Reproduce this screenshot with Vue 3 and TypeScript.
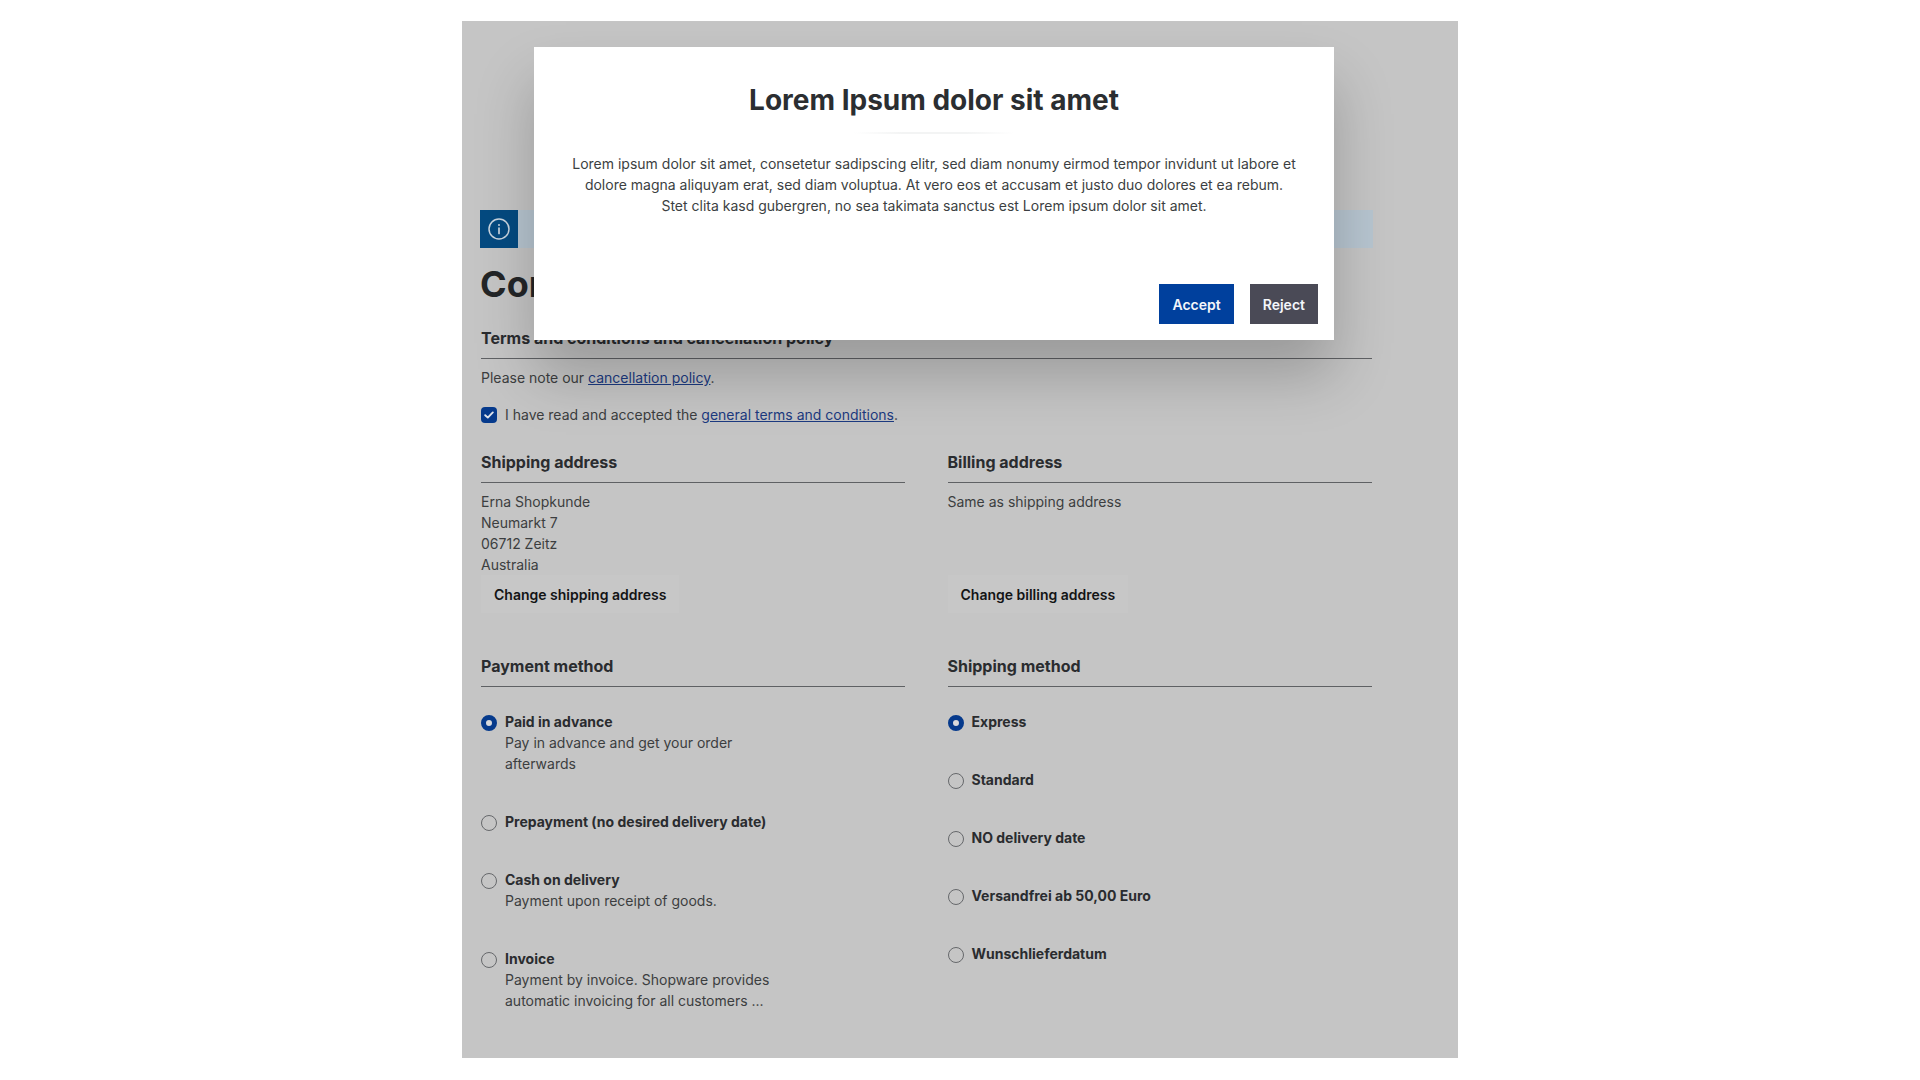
<script setup lang="ts">
interface MethodOption {
  name: string
  lines: string[]
  checked?: boolean
}

const paymentMethods: MethodOption[] = [
  { name: 'Paid in advance', lines: ['Pay in advance and get your order', 'afterwards'], checked: true },
  { name: 'Prepayment (no desired delivery date)', lines: [] },
  { name: 'Cash on delivery', lines: ['Payment upon receipt of goods.'] },
  { name: 'Invoice', lines: ['Payment by invoice. Shopware provides', 'automatic invoicing for all customers ...'] }
]

const shippingMethods: MethodOption[] = [
  { name: 'Express', lines: [], checked: true },
  { name: 'Standard', lines: [] },
  { name: 'NO delivery date', lines: [] },
  { name: 'Versandfrei ab 50,00 Euro', lines: [] },
  { name: 'Wunschlieferdatum', lines: [] }
]

const addressLines = ['Erna Shopkunde', 'Neumarkt 7', '06712 Zeitz', 'Australia']
</script>

<template>
  <div class="stage">
    <main class="panel">
      <div class="alert">
        <div class="alert-icon">
          <svg width="22" height="22" viewBox="0 0 22 22" fill="none">
            <circle cx="11" cy="11" r="10" stroke="#c9d5df" stroke-width="1.5" />
            <circle cx="11" cy="7" r="1" fill="#c9d5df" />
            <path d="M11 10v5.5" stroke="#c9d5df" stroke-width="1.7" stroke-linecap="round" />
          </svg>
        </div>
      </div>

      <h1 class="page-title">Complete order</h1>

      <h2 class="section-title">Terms and conditions and cancellation policy</h2>
      <p class="note">Please note our <a class="link">cancellation policy</a>.</p>
      <div class="accept-row">
        <span class="checkbox">
          <svg width="10" height="8" viewBox="0 0 10 8" fill="none">
            <path d="M1.2 4.2 3.8 6.6 8.8 1.4" stroke="#dfe3ea" stroke-width="1.9" stroke-linecap="round" stroke-linejoin="round" />
          </svg>
        </span>
        <span>I have read and accepted the <a class="link">general terms and conditions</a>.</span>
      </div>

      <div class="columns address-columns">
        <section>
          <h2 class="section-title">Shipping address</h2>
          <div class="address">
            <div v-for="line in addressLines" :key="line">{{ line }}</div>
          </div>
          <button class="ghost-button">Change shipping address</button>
        </section>
        <section>
          <h2 class="section-title">Billing address</h2>
          <div class="address">
            <div>Same as shipping address</div>
            <div>&nbsp;</div>
            <div>&nbsp;</div>
            <div>&nbsp;</div>
          </div>
          <button class="ghost-button">Change billing address</button>
        </section>
      </div>

      <div class="columns method-columns">
        <section>
          <h2 class="section-title">Payment method</h2>
          <div class="methods">
            <div v-for="option in paymentMethods" :key="option.name" class="method">
              <span class="radio" :class="{ 'radio-on': option.checked }"></span>
              <div>
                <div class="method-name">{{ option.name }}</div>
                <div v-for="line in option.lines" :key="line">{{ line }}</div>
              </div>
            </div>
          </div>
        </section>
        <section>
          <h2 class="section-title">Shipping method</h2>
          <div class="methods">
            <div v-for="option in shippingMethods" :key="option.name" class="method">
              <span class="radio" :class="{ 'radio-on': option.checked }"></span>
              <div>
                <div class="method-name">{{ option.name }}</div>
              </div>
            </div>
          </div>
        </section>
      </div>

      <div class="modal">
        <h3 class="modal-title">Lorem Ipsum dolor sit amet</h3>
        <div class="modal-rule"></div>
        <p class="modal-body">
          Lorem ipsum dolor sit amet, consetetur sadipscing elitr, sed diam nonumy eirmod tempor invidunt ut labore et<br />
          dolore magna aliquyam erat, sed diam voluptua. At vero eos et accusam et justo duo dolores et ea rebum.<br />
          Stet clita kasd gubergren, no sea takimata sanctus est Lorem ipsum dolor sit amet.
        </p>
        <div class="modal-actions">
          <button class="action action-accept">Accept</button>
          <button class="action action-reject">Reject</button>
        </div>
      </div>
    </main>
  </div>
</template>

<style>
html,
body {
  background: #ffffff;
}
</style>

<style scoped>
.stage {
  width: 1920px;
  height: 1080px;
  padding: 21px 0 0 462px;
  box-sizing: border-box;
  overflow: hidden;
  font-family: Inter, "Liberation Sans", sans-serif;
  font-size: 14px;
  line-height: 21px;
  color: #3c3e40;
}

.panel {
  position: relative;
  width: 996px;
  height: 1037px;
  box-sizing: border-box;
  padding: 189px 86px 0 19px;
  background: #c5c5c5;
}

.alert {
  height: 38px;
  margin: 0 -1px;
  background: #b7c5d0;
}

.alert-icon {
  width: 38px;
  height: 38px;
  display: flex;
  align-items: center;
  justify-content: center;
  background: #044a80;
}

.page-title {
  margin: 14px 0 0 -1px;
  font-size: 36px;
  line-height: 44px;
  font-weight: 700;
  color: #232527;
}

.section-title {
  margin: 0;
  padding-bottom: 8px;
  border-bottom: 1px solid #5f6164;
  font-size: 16px;
  line-height: 24px;
  font-weight: 700;
  color: #2a2c2f;
}

.page-title + .section-title {
  margin-top: 20px;
}

.note {
  margin: 8px 0 0;
}

.link {
  color: #1c3a80;
  text-decoration: underline;
}

.accept-row {
  display: flex;
  align-items: center;
  gap: 8px;
  margin-top: 16px;
}

.checkbox {
  display: flex;
  align-items: center;
  justify-content: center;
  width: 16px;
  height: 16px;
  margin-top: 1px;
  border-radius: 4px;
  background: #063a8c;
}

.columns {
  display: grid;
  grid-template-columns: 424px 424.5px;
  gap: 42.5px;
}

.address-columns {
  margin-top: 25px;
}

.method-columns {
  margin-top: 41px;
}

.address {
  margin-top: 8px;
}

.ghost-button {
  display: block;
  height: 38px;
  margin-top: 0;
  padding: 0 13px;
  border: none;
  background: #c7c7c7;
  font-family: inherit;
  font-size: 14px;
  font-weight: 600;
  color: #131415;
}

.methods {
  margin-top: 24px;
}

.method {
  display: flex;
  gap: 8px;
  margin-bottom: 37px;
}

.method-name {
  font-weight: 700;
  color: #2a2c2f;
}

.radio {
  flex: none;
  width: 16px;
  height: 16px;
  margin-top: 4px;
  box-sizing: border-box;
  border: 1px solid #66686b;
  border-radius: 50%;
}

.radio-on {
  border: 5px solid #063a8c;
  background: #d8d9dc;
}

.modal {
  position: absolute;
  top: 26px;
  left: 72px;
  width: 800px;
  height: 293px;
  display: flex;
  flex-direction: column;
  background: #ffffff;
  box-shadow: 0 35px 55px rgba(0, 0, 0, 0.22);
}

.modal-title {
  margin: 36px 0 0;
  font-size: 28px;
  line-height: 34px;
  font-weight: 700;
  text-align: center;
  color: #2b2e31;
}

.modal-rule {
  width: 160px;
  height: 2px;
  margin: 15px auto 0;
  background: linear-gradient(90deg, #ffffff, #f3f4f4 30%, #f3f4f4 70%, #ffffff);
}

.modal-body {
  margin: 19px 0 0;
  text-align: center;
  color: #3c3f42;
}

.modal-actions {
  display: flex;
  justify-content: flex-end;
  gap: 16px;
  margin-top: auto;
  padding: 0 16px 16px 0;
}

.action {
  height: 40px;
  padding: 0 13px;
  border: none;
  font-family: inherit;
  font-size: 14px;
  font-weight: 600;
  color: #f4f6fa;
}

.action-accept {
  background: #00409d;
}

.action-reject {
  background: #4a4a56;
}
</style>
